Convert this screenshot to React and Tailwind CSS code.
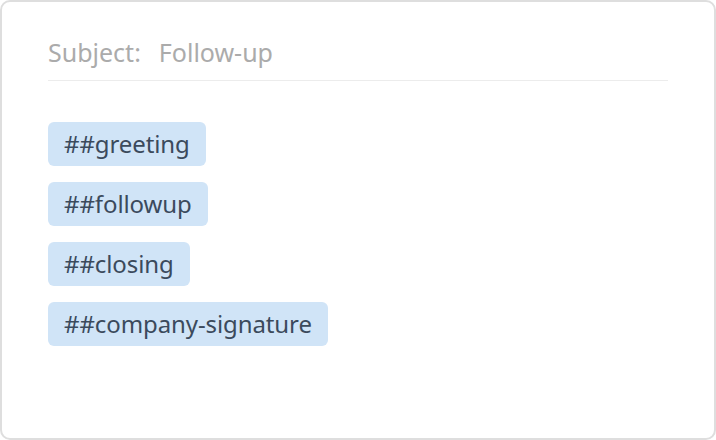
export default function App() {
  const tags = ["##greeting", "##followup", "##closing", "##company-signature"];

  return (
    <div className="w-[716px] h-[440px] bg-white">
      <div
        className="h-full border-2 border-[#dedede] rounded-[10px] px-[46px] pt-[34px]"
        style={{ fontFamily: '"Noto Sans", "Open Sans", sans-serif' }}
      >
        <div className="flex items-center gap-[18px] pb-3 border-b border-[#ececec] text-[25px] leading-8 text-[#ababab]">
          <span>Subject:</span>
          <span>Follow-up</span>
        </div>

        <div className="mt-[41px] flex flex-col items-start gap-4">
          {tags.map((t) => (
            <span
              key={t}
              className="px-4 py-1.5 rounded-md bg-[#d0e4f7] text-[#3b4a5c] text-[24px] leading-8 tracking-[-0.1px]"
            >
              {t}
            </span>
          ))}
        </div>
      </div>
    </div>
  );
}
